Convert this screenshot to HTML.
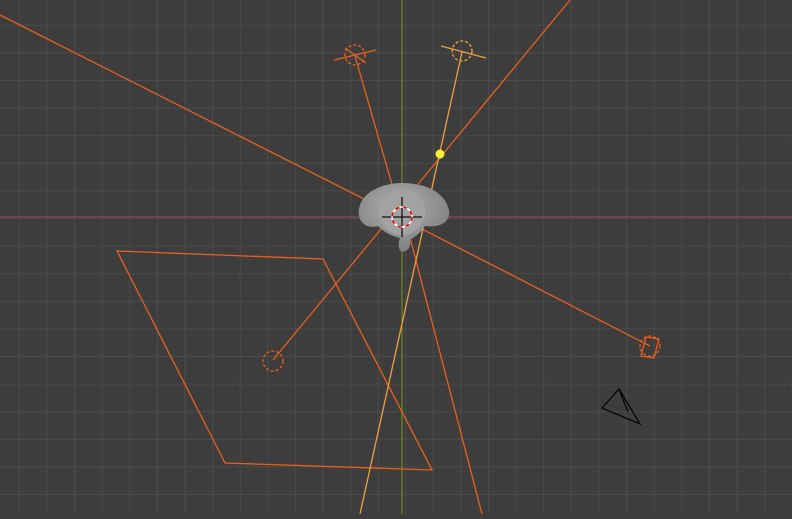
<!DOCTYPE html>
<html><head><style>html,body{margin:0;padding:0;background:#3d3d3d;overflow:hidden}</style></head>
<body>
<svg width="792" height="514" viewBox="0 0 792 514" xmlns="http://www.w3.org/2000/svg">
<defs>
<pattern id="g" x="18.8" y="24.8" width="27.6" height="27.6" patternUnits="userSpaceOnUse">
<path d="M0 0V27.6M0 0H27.6" stroke="#4b4b4b" stroke-width="2" fill="none"/>
</pattern>
<radialGradient id="m" cx="0.45" cy="0.35" r="0.7"><stop offset="0" stop-color="#b0b0b0"/><stop offset="1" stop-color="#7a7a7a"/></radialGradient>
</defs>
<rect width="792" height="514" fill="#3d3d3d"/>
<rect width="792" height="514" fill="url(#g)"/>
<line x1="0" y1="217" x2="792" y2="217" stroke="#8a4a52" stroke-width="1.2"/>
<line x1="402" y1="0" x2="402" y2="514" stroke="#6c8a1e" stroke-width="1.2"/>
<g stroke="#e8601c" stroke-width="1.3" fill="none">
<line x1="0" y1="15" x2="372" y2="203"/>
<line x1="570" y1="0" x2="273" y2="360"/>
<line x1="355" y1="56" x2="395" y2="195"/>
<line x1="650" y1="346" x2="420" y2="228"/>
<line x1="408" y1="230" x2="482" y2="514"/>
<polygon points="117,251 323,259 432,470 225,463"/>
<circle cx="273" cy="361" r="10" stroke-dasharray="3 2"/>
<circle cx="355" cy="55" r="10" stroke-dasharray="3 2"/>
<path d="M334 60 L376 50 M345 48 L366 63"/>
<circle cx="650" cy="346" r="10" stroke-dasharray="3 2"/>
<path d="M641 356 L646 337 L659 339 L654 358 Z"/>
</g>
<g stroke="#f0a040" stroke-width="1.3" fill="none">
<line x1="462" y1="52" x2="360" y2="514"/>
<circle cx="462" cy="51" r="10" stroke-dasharray="3 2"/>
<line x1="441" y1="46" x2="486" y2="58"/>
</g>
<circle cx="440" cy="154" r="4.5" fill="#ffee33"/>
<path d="M360 205 C 365 190 385 183 402 183 C 425 183 445 192 449 210 C 451 222 440 228 425 226 C 420 234 413 238 410 240 C 412 248 406 252 402 252 C 398 250 398 242 400 238 C 390 236 382 230 378 226 C 365 230 355 220 360 205 Z" fill="url(#m)"/>
<circle cx="402" cy="212" r="23" fill="#a2a2a2"/>
<g stroke="#111" stroke-width="1.3"><line x1="382" y1="217" x2="422" y2="217"/><line x1="402" y1="197" x2="402" y2="237"/></g>
<circle cx="402" cy="217" r="10" fill="none" stroke="#fff" stroke-width="1.5"/>
<circle cx="402" cy="217" r="10" fill="none" stroke="#e00" stroke-width="1.5" stroke-dasharray="4 4"/>
<g stroke="#000" stroke-width="1.2" fill="none">
<path d="M602 408 L619 389 L640 424 Z M602 408 L640 424 M619 389 L628 412"/>
</g>
</svg>
</body></html>
